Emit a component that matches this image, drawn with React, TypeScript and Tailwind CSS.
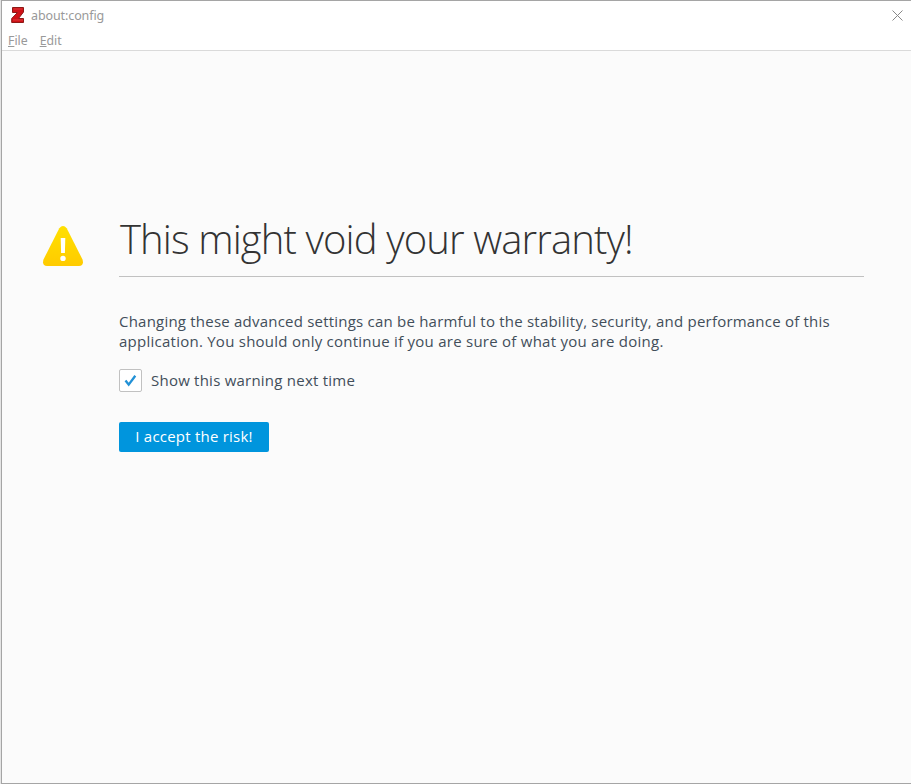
function ZLogo() {
  return (
    <svg className="h-[17px] w-[14px] shrink-0" viewBox="0 0 14 17">
      <path d="M1.500 .5H12.500V5L7.500 11.500H12.500V15.500H.7V11.500L6.500 5.500H1.500Z" fill="#cf1116" stroke="#8d1a17" />
      <path d="M2.500 2h9M2 13h10" stroke="#dd3a3c" />
    </svg>
  );
}

function WarningIcon() {
  return (
    <svg className="mt-[225px] h-[42px] w-[42px] shrink-0" viewBox="0 0 42 42">
      <defs>
        <linearGradient id="warn" x1="0" y1="0" x2="0" y2="1">
          <stop offset="0" stopColor="#ffe000" />
          <stop offset="1" stopColor="#ffcb00" />
        </linearGradient>
      </defs>
      <path d="M17.3 3.2Q21-1.2 24.7 3.2L40.5 34.5Q42.300 40.500 37 41H5Q-.3 40.500 1.500 34.500Z" fill="url(#warn)" />
      <path d="M18.700 13H23.300L22.900 28H19.100Z" fill="#fff" />
      <circle cx="21" cy="33.400" r="2.700" fill="#fff" />
    </svg>
  );
}

export default function App() {
  return (
    <div className="flex h-[784px] w-[911px] flex-col overflow-hidden bg-[#e4e4e4] pl-px font-['Open_Sans','Noto_Sans',sans-serif]">
      <div className="flex grow flex-col border-y border-l border-[#a5a5a5] bg-[#fbfbfb]">
        <header className="flex h-[50px] shrink-0 flex-col border-b border-[#dadada] bg-white text-[#999]">
          <div className="flex h-[29px] shrink-0 items-center pr-[8px] pl-[9px]">
            <ZLogo />
            <span className="ml-1.5 grow font-['Noto_Sans',sans-serif] text-[12.5px] leading-[18px] tracking-[-0.1px]">about:config</span>
            <svg className="h-[11px] w-[11px]" viewBox="0 0 11 11">
              <path d="M.5 .5 10.500 10.500M10.500 .5 .5 10.500" stroke="#888" />
            </svg>
          </div>
          <nav className="flex gap-3 pt-px pl-1.5 font-['Noto_Sans',sans-serif] text-[12.3px] leading-5">
            <span><u>F</u>ile</span>
            <span><u>E</u>dit</span>
          </nav>
        </header>
        <main className="flex grow">
          <div className="-mt-[51px] flex w-[117px] shrink-0 pl-10">
            <WarningIcon />
          </div>
          <section className="w-[745px] pt-[157px]">
            <h1 className="h-[69px] border-b border-[#c1c1c1] pt-[3px] pl-px text-[40px] leading-[56px] font-light tracking-[-0.88px] whitespace-nowrap text-[#333]">
              This might void your warranty!
            </h1>
            <p className="mt-[34px] text-[15px] leading-5 tracking-[0.215px] whitespace-nowrap text-[#424e5a]">
              <span>Changing these advanced settings can be harmful to the stability, security, and performance of this</span>
              <br />
              <span className="tracking-[0.25px]">application. You should only continue if you are sure of what you are doing.</span>
            </p>
            <label className="mt-[18px] flex h-[23px] items-center text-[15px] tracking-[0.23px] text-[#424e5a]">
              <span className="flex h-[23px] w-[23px] items-center justify-center rounded-[2px] border border-[#c1c1c1] bg-white">
                <svg className="h-[13px] w-[13px]" viewBox="0 0 13 13">
                  <path d="M1.500 6.500 4.700 10.700 11.300 1.700" fill="none" stroke="#2291d6" strokeWidth="2.300" />
                </svg>
              </span>
              <span className="ml-[9px]">Show this warning next time</span>
            </label>
            <button className="mt-[30px] h-[30px] w-[150px] rounded-[2px] bg-[#0095dd] pb-px text-[15px] leading-[29px] tracking-[0.22px] text-white">
              I accept the risk!
            </button>
          </section>
        </main>
      </div>
    </div>
  );
}
